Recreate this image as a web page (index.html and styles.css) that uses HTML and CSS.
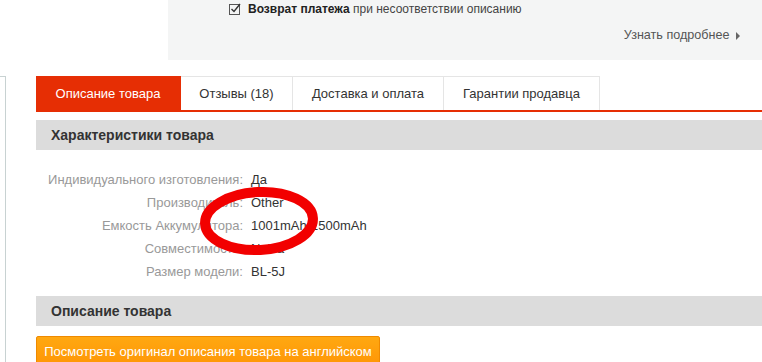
FILE: index.html
```html
<!DOCTYPE html>
<html lang="ru">
<head>
<meta charset="utf-8">
<link rel="stylesheet" href="styles.css">
</head>
<body>
<div class="top">
  <div class="top-spacer"></div>
  <div class="guarantee">
    <div class="g-line">
      <svg class="chk" width="12" height="12" viewBox="0 0 12 12"><rect x="0.5" y="1.5" width="10" height="10" fill="none" stroke="#555" stroke-width="1"/><path d="M2.5 6 L5 8.5 L11 1" fill="none" stroke="#333" stroke-width="1.4"/></svg>
      <span><b>Возврат платежа</b> <span class="muted">при несоответствии описанию</span></span>
    </div>
    <div class="g-more">Узнать подробнее <span class="tri"></span></div>
  </div>
</div>
<div class="main">
  <div class="sidebar"></div>
  <div class="content">
    <div class="tabs">
      <div class="tab active" style="width:145px">Описание товара</div>
      <div class="tab" style="width:112px">Отзывы (18)</div>
      <div class="tab" style="width:151px">Доставка и оплата</div>
      <div class="tab" style="width:156px">Гарантии продавца</div>
    </div>
    <div class="sec-head">Характеристики товара</div>
    <div class="specs">
      <div class="row"><span class="lbl">Индивидуального изготовления:</span><span class="val">Да</span></div>
      <div class="row"><span class="lbl">Производитель:</span><span class="val">Other</span></div>
      <div class="row"><span class="lbl">Емкость Аккумулятора:</span><span class="val">1001mAh-1500mAh</span></div>
      <div class="row"><span class="lbl">Совместимость:</span><span class="val">Nokia</span></div>
      <div class="row"><span class="lbl">Размер модели:</span><span class="val">BL-5J</span></div>
      <svg class="mark" width="130" height="80" viewBox="0 0 130 80"><ellipse cx="62" cy="36" rx="54" ry="29" fill="none" stroke="#f20000" stroke-width="10" transform="rotate(-3 62 36)"/></svg>
    </div>
    <div class="sec-head sec-head2">Описание товара</div>
    <div class="btn">Посмотреть оригинал описания товара на английском</div>
  </div>
</div>
</body>
</html>
```
FILE: styles.css
```css
html, body { margin: 0; padding: 0; background: #fff; }
body { font-family: "Liberation Sans", Arial, sans-serif; font-size: 12px; color: #333; width: 762px; height: 362px; overflow: hidden; }
.top { display: flex; height: 60px; }
.top-spacer { width: 168px; flex: none; }
.guarantee { flex: 1; background: #f4f5f5; position: relative; }
.g-line { display: flex; align-items: center; gap: 7px; padding-left: 61px; margin-top: 2px; height: 14px; font-size: 12px; color: #222; }
.g-line .chk { flex: none; }
.muted { color: #444; }
.g-more { text-align: right; padding-right: 22px; margin-top: 12px; color: #555; font-size: 12.6px; line-height: 14px; }
.tri { display: inline-block; width: 0; height: 0; border-left: 4px solid #666; border-top: 4px solid transparent; border-bottom: 4px solid transparent; margin-left: 3px; vertical-align: -1px; }
.main { display: flex; margin-top: 16px; }
.sidebar { width: 5px; flex: none; border-top: 1px solid #c8d2d2; border-right: 1px solid #c8d2d2; height: 300px; }
.content { flex: 1; margin-left: 30px; }
.tabs { display: flex; height: 34px; border-bottom: 2px solid #e62e04; }
.tab { box-sizing: border-box; height: 34px; display: flex; align-items: center; justify-content: center; font-size: 13px; color: #333; border-top: 1px solid #e5e5e5; border-right: 1px solid #e5e5e5; background: #fff; }
.tab.active { background: #e62e04; color: #fff; border-color: #e62e04; }
.sec-head { margin-top: 8px; height: 30px; background: #dcdcdc; padding-left: 15px; display: flex; align-items: center; font-weight: bold; font-size: 14px; color: #333; }
.specs { position: relative; padding-top: 18px; padding-bottom: 13px; }
.row { display: flex; height: 23px; align-items: center; font-size: 13px; }
.lbl { width: 207px; text-align: right; color: #999; padding-right: 8px; flex: none; }
.val { color: #333; }
.mark { position: absolute; left: 161px; top: 35px; }
.sec-head2 { margin-top: 0; }
.btn { margin-top: 10px; width: 344px; box-sizing: border-box; height: 30px; background: linear-gradient(#ffa811, #ff9606); border: 1px solid #ef8a00; border-radius: 2px; color: #fff; font-size: 13px; display: flex; align-items: center; justify-content: center; }
```
